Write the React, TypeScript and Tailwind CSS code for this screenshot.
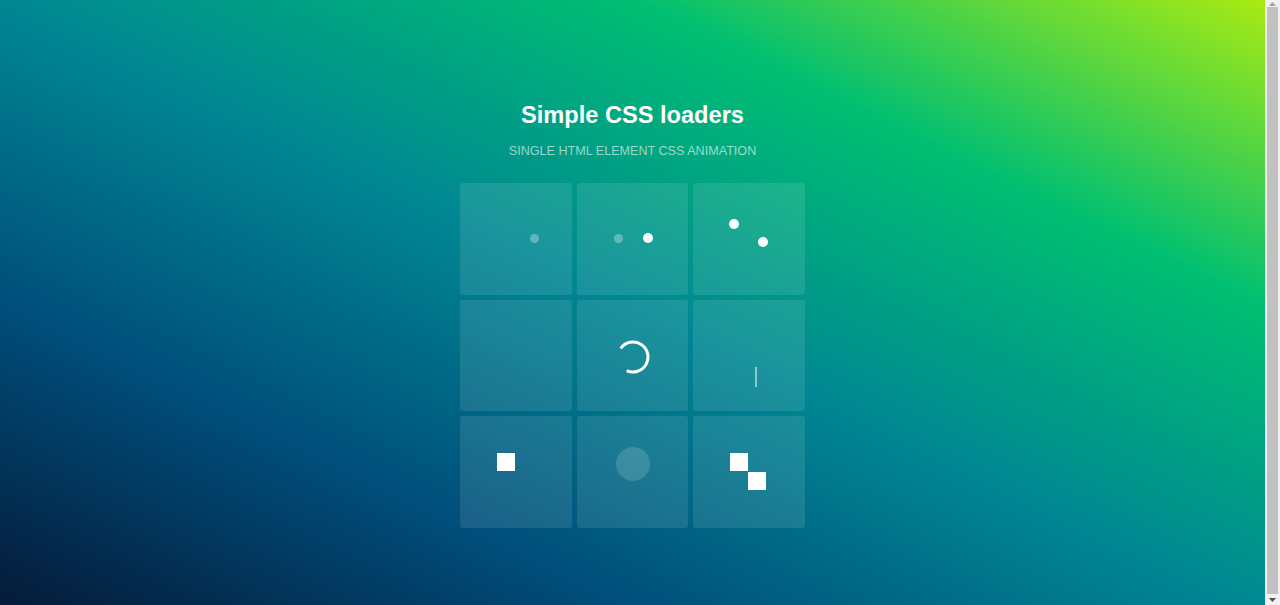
export default function App() {
  return (
    <div className="flex h-screen w-full overflow-hidden font-['Liberation_Sans',Arial,sans-serif]">
      <main className="h-[615px] flex-1 bg-[linear-gradient(to_right_top,#051937,#004d7a,#008793,#00bf72,#a8eb12)]">
        <div className="flex flex-col items-center pt-[101px]">
          {/* Header */}
          <h1 className="text-[23.6px] leading-[28px] font-bold text-white">Simple CSS loaders</h1>
          <p className="mt-[14px] text-[12.6px] leading-[16px] text-white/60">SINGLE HTML ELEMENT CSS ANIMATION</p>

          {/* Loaders grid */}
          <div className="mt-[24px] grid w-[345px] grid-cols-3 gap-[5px]">
            <div className="relative aspect-square rounded-[3px] bg-white/10">
              <span className="absolute left-[70px] top-[51px] h-[9px] w-[9px] rounded-full bg-white/30" />
            </div>
            <div className="relative aspect-square rounded-[3px] bg-white/10">
              <span className="absolute left-[37px] top-[51px] h-[9px] w-[9px] rounded-full bg-white/30" />
              <span className="absolute left-[66px] top-[50px] h-[10px] w-[10px] rounded-full bg-white" />
            </div>
            <div className="relative aspect-square rounded-[3px] bg-white/10">
              <span className="absolute left-[36px] top-[36px] h-[10px] w-[10px] rounded-full bg-white" />
              <span className="absolute left-[65px] top-[54px] h-[10px] w-[10px] rounded-full bg-white" />
            </div>

            <div className="aspect-square rounded-[3px] bg-white/10" />
            <div className="relative aspect-square rounded-[3px] bg-white/10">
              <svg className="absolute left-[39px] top-[40px]" width="34" height="34" viewBox="0 0 34 34" fill="none">
                <path d="M4.71 8.4 A15 15 0 1 1 10.66 30.59" stroke="white" strokeWidth="3" />
              </svg>
            </div>
            <div className="relative aspect-square rounded-[3px] bg-white/10">
              <span className="absolute left-[62px] top-[67px] h-[20px] w-[2px] bg-white/50" />
            </div>

            <div className="relative aspect-square rounded-[3px] bg-white/10">
              <span className="absolute left-[37px] top-[37px] h-[18px] w-[18px] bg-white" />
            </div>
            <div className="relative aspect-square rounded-[3px] bg-white/10">
              <span className="absolute left-[39px] top-[31px] h-[34px] w-[34px] rounded-full bg-white/15" />
            </div>
            <div className="relative aspect-square rounded-[3px] bg-white/10">
              <span className="absolute left-[37px] top-[37px] h-[18px] w-[18px] bg-white" />
              <span className="absolute left-[55px] top-[56px] h-[18px] w-[18px] bg-white" />
            </div>
          </div>
        </div>
      </main>

      {/* Scrollbar */}
      <aside className="flex h-full w-[15px] shrink-0 flex-col bg-[#f1f1f1]">
        <div className="flex h-[7px] items-center justify-center">
          <svg width="7" height="4" viewBox="0 0 7 4">
            <path d="M0 4 L3.5 0 L7 4 Z" fill="#a3a3a3" />
          </svg>
        </div>
        <div className="mx-[2px] flex-1 bg-[#c1c1c1]" />
        <div className="flex h-[11px] items-center justify-center">
          <svg width="7" height="4" viewBox="0 0 7 4">
            <path d="M0 0 L7 0 L3.5 4 Z" fill="#505050" />
          </svg>
        </div>
      </aside>
    </div>
  )
}
